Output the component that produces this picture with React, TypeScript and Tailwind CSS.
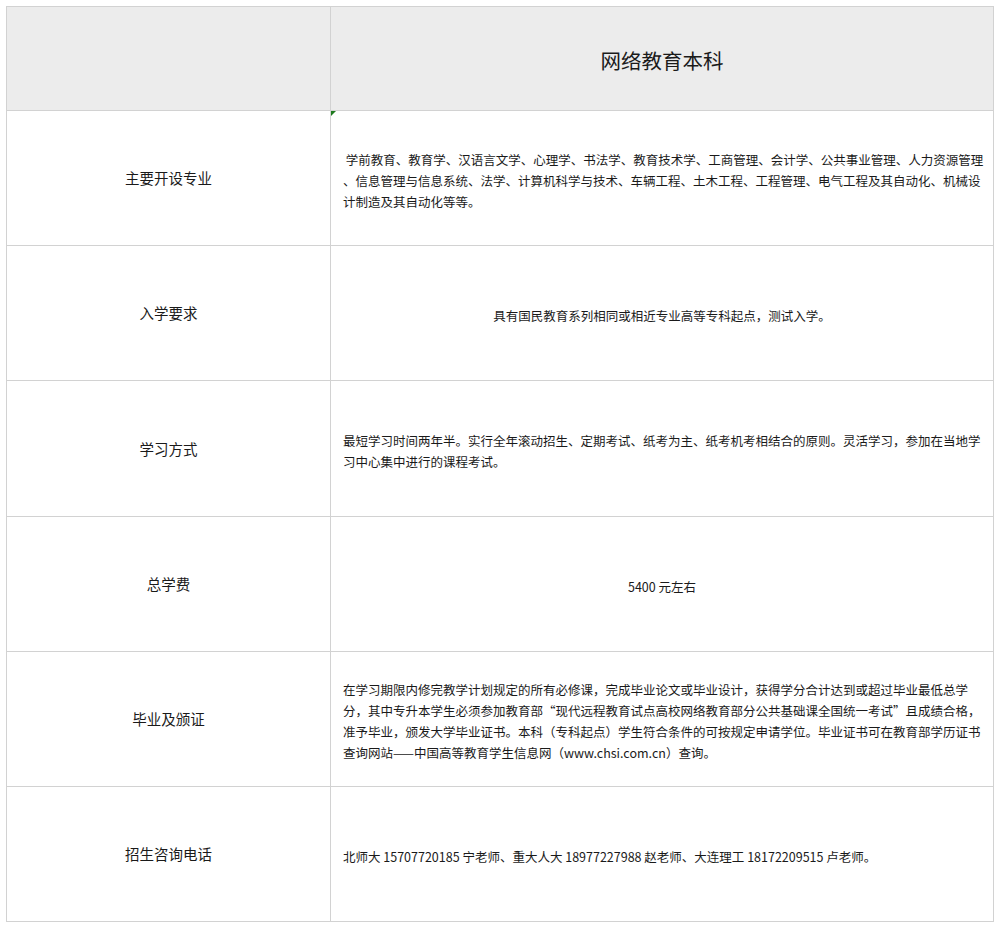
const rows: { label: string; lines: string[]; center?: boolean; h: string }[] = [
  {
    label: '主要开设专业',
    h: 'h-[135px]',
    lines: [
      ' 学前教育、教育学、汉语言文学、心理学、书法学、教育技术学、工商管理、会计学、公共事业管理、人力资源管理',
      '、信息管理与信息系统、法学、计算机科学与技术、车辆工程、土木工程、工程管理、电气工程及其自动化、机械设',
      '计制造及其自动化等等。',
    ],
  },
  {
    label: '入学要求',
    h: 'h-[135px]',
    center: true,
    lines: ['具有国民教育系列相同或相近专业高等专科起点，测试入学。'],
  },
  {
    label: '学习方式',
    h: 'h-[136px]',
    lines: [
      '最短学习时间两年半。实行全年滚动招生、定期考试、纸考为主、纸考机考相结合的原则。灵活学习，参加在当地学',
      '习中心集中进行的课程考试。',
    ],
  },
  {
    label: '总学费',
    h: 'h-[135px]',
    center: true,
    lines: ['5400 元左右'],
  },
  {
    label: '毕业及颁证',
    h: 'h-[135px]',
    lines: [
      '在学习期限内修完教学计划规定的所有必修课，完成毕业论文或毕业设计，获得学分合计达到或超过毕业最低总学',
      '分，其中专升本学生必须参加教育部“现代远程教育试点高校网络教育部分公共基础课全国统一考试”且成绩合格，',
      '准予毕业，颁发大学毕业证书。本科（专科起点）学生符合条件的可按规定申请学位。毕业证书可在教育部学历证书',
      '查询网站——中国高等教育学生信息网（www.chsi.com.cn）查询。',
    ],
  },
  {
    label: '招生咨询电话',
    h: 'h-[135px]',
    lines: ['北师大 15707720185 宁老师、重大人大 18977227988 赵老师、大连理工 18172209515 卢老师。'],
  },
];

const App = () => {
  return (
    <div
      className="min-h-[928px] bg-white pt-[6px] pl-[6px] text-[#1a1a1a]"
      style={{ fontFamily: '"Noto Sans CJK SC", "Noto Sans", sans-serif' }}
    >
      <div className="grid w-[988px] grid-cols-[324px_1fr] border-t border-l border-[#d2d2d2]">
        {/* Header */}
        <div className="h-[104px] border-r border-b border-[#d2d2d2] bg-[#ececec]" />
        <div className="flex h-[104px] items-center justify-center border-r border-b border-[#d2d2d2] bg-[#ececec] pt-[4px]">
          <span className="text-[20.5px] text-[#1a1a1a]">网络教育本科</span>
        </div>

        {rows.map((row, i) => (
          <div key={row.label} className="contents">
            <div
              className={`flex ${row.h} items-center justify-center border-r border-b border-[#d2d2d2] text-[14.5px]`}
            >
              {row.label}
            </div>
            <div
              className={`relative flex ${row.h} flex-col justify-center border-r border-b border-[#d2d2d2] pt-[4px] text-[12.5px] leading-[21px] ${
                row.center ? 'items-center' : 'items-start pl-[12px]'
              }`}
            >
              {i === 0 && (
                <svg className="absolute top-0 left-0" width="5" height="5" viewBox="0 0 5 5">
                  <polygon points="0,0 5,0 0,5" fill="#1e7a1e" />
                </svg>
              )}
              {row.lines.map((line) => (
                <p key={line} className="whitespace-pre">
                  {line}
                </p>
              ))}
            </div>
          </div>
        ))}
      </div>
    </div>
  );
};

export default App;
